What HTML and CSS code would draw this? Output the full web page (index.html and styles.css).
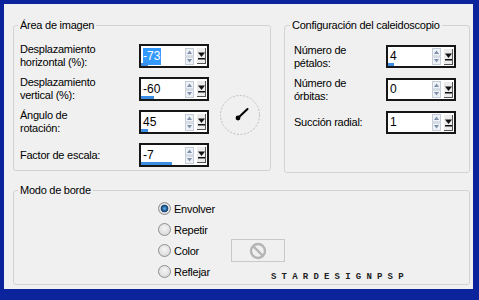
FILE: index.html
```html
<!DOCTYPE html>
<html lang="es">
<head>
  <meta charset="UTF-8">
  <title>Caleidoscopio</title>
  <link rel="stylesheet" href="styles.css">
</head>
<body>
  <svg class="defs" width="0" height="0">
    <symbol id="arrows" viewBox="0 0 9 17">
      <rect x=".5" y=".5" width="8" height="7.5" fill="#eef1f6" stroke="#c4ccd8"/>
      <path d="M2 6h5L4.5 2.5z" fill="#7f91aa"/>
      <rect x=".5" y="9" width="8" height="7.5" fill="#eef1f6" stroke="#c4ccd8"/>
      <path d="M2 11h5L4.5 14.5z" fill="#7f91aa"/>
    </symbol>
    <symbol id="drop" viewBox="0 0 7 9">
      <path d="M0 1.5h7L3.5 6z" fill="#111"/>
      <rect x="0" y="7" width="7" height="1.5" fill="#111"/>
    </symbol>
  </svg>

  <div class="frame">
    <div class="top">
      <fieldset class="group area">
        <legend>Área de imagen</legend>
        <div class="rows area-rows">
          <label>Desplazamiento<br>horizontal (%):</label>
          <div class="spin">
            <div class="field"><span class="val sel">-73</span><i class="bar" style="width:7px"></i></div>
            <svg class="arrows"><use href="#arrows"/></svg>
            <span class="drop"><svg><use href="#drop"/></svg></span>
          </div>

          <label>Desplazamiento<br>vertical (%):</label>
          <div class="spin">
            <div class="field"><span class="val">-60</span><i class="bar" style="width:13px"></i></div>
            <svg class="arrows"><use href="#arrows"/></svg>
            <span class="drop"><svg><use href="#drop"/></svg></span>
          </div>

          <label>Ángulo de<br>rotación:</label>
          <div class="spin">
            <div class="field"><span class="val">45</span><i class="bar" style="width:7px"></i></div>
            <svg class="arrows"><use href="#arrows"/></svg>
            <span class="drop"><svg><use href="#drop"/></svg></span>
          </div>

          <label>Factor de escala:</label>
          <div class="spin">
            <div class="field"><span class="val">-7</span><i class="bar" style="width:31px"></i></div>
            <svg class="arrows"><use href="#arrows"/></svg>
            <span class="drop"><svg><use href="#drop"/></svg></span>
          </div>

          <svg class="dial" width="42" height="42" viewBox="0 0 42 42">
            <circle cx="21" cy="21" r="19.5" fill="none" stroke="#bdbdbd" stroke-dasharray="2 1.5"/>
            <line x1="19" y1="24" x2="28.5" y2="15" stroke="#000" stroke-width="2" stroke-linecap="round"/>
            <circle cx="19" cy="24" r="2.4" fill="#000"/>
          </svg>
        </div>
      </fieldset>

      <fieldset class="group kal">
        <legend>Configuración del caleidoscopio</legend>
        <div class="rows kal-rows">
          <label>Número de<br>pétalos:</label>
          <div class="spin">
            <div class="field"><span class="val">4</span><i class="bar" style="width:6px"></i></div>
            <svg class="arrows"><use href="#arrows"/></svg>
            <span class="drop"><svg><use href="#drop"/></svg></span>
          </div>

          <label>Número de<br>órbitas:</label>
          <div class="spin">
            <div class="field"><span class="val">0</span></div>
            <svg class="arrows"><use href="#arrows"/></svg>
            <span class="drop"><svg><use href="#drop"/></svg></span>
          </div>

          <label>Succión radial:</label>
          <div class="spin">
            <div class="field"><span class="val">1</span></div>
            <svg class="arrows"><use href="#arrows"/></svg>
            <span class="drop"><svg><use href="#drop"/></svg></span>
          </div>
        </div>
      </fieldset>
    </div>

    <fieldset class="group mode">
      <legend>Modo de borde</legend>
      <div class="radios">
        <div class="opt"><span class="radio on"></span>Envolver</div>
        <div class="opt"><span class="radio"></span>Repetir</div>
        <div class="opt"><span class="radio"></span>Color
          <span class="swatch">
            <svg width="18" height="18" viewBox="0 0 18 18">
              <circle cx="9" cy="9" r="7" fill="none" stroke="#b5b5b5" stroke-width="2.4"/>
              <line x1="4.2" y1="4.2" x2="13.8" y2="13.8" stroke="#b5b5b5" stroke-width="2.4"/>
            </svg>
          </span>
        </div>
        <div class="opt"><span class="radio"></span>Reflejar</div>
      </div>
      <span class="mark">STARDESIGNPSP</span>
    </fieldset>
  </div>
</body>
</html>
```

FILE: styles.css
```css
body {
    margin: 0;
    font-family: "Liberation Sans", Arial, sans-serif;
    font-size: 11px;
    letter-spacing: -0.25px;
    color: #000;
}

.defs {
    position: absolute;
}

.frame {
    width: 479px;
    height: 300px;
    box-sizing: border-box;
    border: solid #0b239b;
    border-width: 4px 6px 11px 4px;
    background: #f0f0f0;
    padding: 15px 3px 0 9px;
}

.top {
    display: flex;
    gap: 13px;
}

.group {
    margin: 0;
    border: 1px solid #d3d3d3;
    border-radius: 3px;
    min-width: 0;
}

.group legend {
    line-height: 13px;
    padding: 0 2px;
    margin-left: -2px;
}

.area {
    width: 258px;
    height: 152px;
    box-sizing: border-box;
    padding: 12px 0 0 6px;
}

.kal {
    width: 186px;
    height: 154px;
    box-sizing: border-box;
    padding: 13px 0 0 9px;
}

.kal legend {
    margin-left: -4px;
}

.rows {
    display: grid;
    row-gap: 9px;
    align-items: center;
}

.rows label {
    grid-column: 1;
    line-height: 13px;
}

.rows .spin {
    grid-column: 2;
}

.area-rows {
    grid-template-columns: 119px 70px 42px;
    grid-template-rows: repeat(4, 24px);
}

.kal-rows {
    grid-template-columns: 92px 70px;
    grid-template-rows: repeat(3, 23px);
    row-gap: 10px;
}

.dial {
    grid-column: 3;
    grid-row: 2 / 4;
    align-self: end;
    margin: 0 0 -2px 10px;
}

.spin {
    display: flex;
    align-items: center;
    height: 100%;
    box-sizing: border-box;
    border: 2px solid #161616;
    background: #fff;
}

.field {
    position: relative;
    flex: 1;
    align-self: stretch;
    display: flex;
    align-items: center;
    padding-left: 2px;
    font-size: 12px;
    letter-spacing: 0;
}

.val {
    padding: 1px 1px 2px 0;
}

.val.sel {
    background: #3399ff;
    color: #fff;
}

.bar {
    position: absolute;
    left: 0;
    bottom: 0;
    height: 3px;
    background: #3b8ee4;
}

.arrows {
    width: 9px;
    height: 17px;
    margin-right: 3px;
}

.drop {
    width: 9px;
    height: 16px;
    box-sizing: border-box;
    margin-right: 1px;
    background: #ececec;
    border-right: 1px solid #555;
    border-bottom: 1px solid #555;
    display: flex;
    align-items: center;
    justify-content: center;
}

.drop svg {
    width: 7px;
    height: 9px;
}

.mode {
    position: relative;
    height: 101px;
    box-sizing: border-box;
    margin-top: 11px;
    padding: 0 0 0 6px;
}

.radios {
    display: grid;
    grid-template-rows: repeat(4, 21px);
    margin-left: 138px;
    margin-top: 1px;
}

.opt {
    display: flex;
    align-items: center;
}

.radio {
    width: 11px;
    height: 11px;
    border: 1px solid #8e8f8f;
    border-radius: 50%;
    margin-right: 3px;
    background: radial-gradient(circle at 50% 40%, #f6f6f6, #d2d2d2);
}

.radio.on {
    background: radial-gradient(circle, #6cb3ea 0, #1d5b94 2.5px, #163f69 3.5px, #e9e9e9 4.2px, #cfcfcf 6px);
}

.swatch {
    width: 54px;
    height: 23px;
    box-sizing: border-box;
    margin-left: 32px;
    border: 1px solid #c9c9c9;
    display: flex;
    align-items: center;
    justify-content: center;
}

.mark {
    position: absolute;
    left: 257px;
    top: 75px;
    font-family: "Liberation Mono", monospace;
    font-weight: bold;
    font-size: 9px;
    letter-spacing: 5.2px;
    color: #1e1e1e;
}
```
